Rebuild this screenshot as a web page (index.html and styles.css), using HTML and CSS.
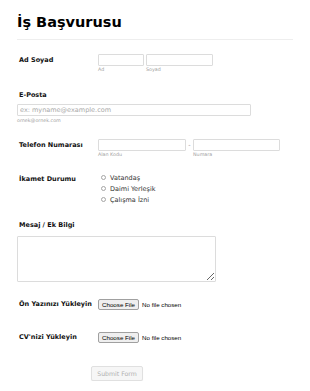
FILE: index.html
```html
<!DOCTYPE html>
<html lang="tr">
<head>
<meta charset="utf-8">
<title>İş Başvurusu</title>
<link rel="stylesheet" href="styles.css">
</head>
<body>
<form class="form">
  <h1 class="title">İş Başvurusu</h1>
  <div class="divider"></div>

  <div class="row row-name">
    <label class="label">Ad Soyad</label>
    <div class="fields">
      <div class="field">
        <input class="input w-first" type="text">
        <span class="sub">Ad</span>
      </div>
      <div class="field">
        <input class="input w-last" type="text">
        <span class="sub">Soyad</span>
      </div>
    </div>
  </div>

  <div class="block block-email">
    <label class="label">E-Posta</label>
    <input class="input w-email" type="email" placeholder="ex: myname@example.com">
    <span class="sub hint">ornek@ornek.com</span>
  </div>

  <div class="row row-phone">
    <label class="label">Telefon Numarası</label>
    <div class="fields">
      <div class="field">
        <input class="input w-area" type="tel">
        <span class="sub">Alan Kodu</span>
      </div>
      <span class="dash">-</span>
      <div class="field">
        <input class="input w-num" type="tel">
        <span class="sub">Numara</span>
      </div>
    </div>
  </div>

  <div class="row row-radio">
    <label class="label label-radio">İkamet Durumu</label>
    <div class="radios">
      <label class="radio"><input type="radio" name="ikamet"><span>Vatandaş</span></label>
      <label class="radio"><input type="radio" name="ikamet"><span>Daimi Yerleşik</span></label>
      <label class="radio"><input type="radio" name="ikamet"><span>Çalışma İzni</span></label>
    </div>
  </div>

  <div class="block block-message">
    <label class="label">Mesaj / Ek Bilgi</label>
    <textarea class="textarea"></textarea>
  </div>

  <div class="row row-file row-cover">
    <label class="label">Ön Yazınızı Yükleyin</label>
    <input class="file" type="file">
  </div>

  <div class="row row-file row-cv">
    <label class="label">CV'nizi Yükleyin</label>
    <input class="file" type="file">
  </div>

  <div class="actions">
    <button class="submit" type="button">Submit Form</button>
  </div>
</form>
</body>
</html>
```

FILE: styles.css
```css
html, body {
  margin: 0;
  padding: 0;
  background: #fff;
}

body {
  font-family: "DejaVu Sans", Verdana, sans-serif;
  color: #000;
}

.form {
  width: 276px;
  padding: 13px 0 0 17px;
}

.title {
  margin: 0;
  font-size: 14.5px;
  line-height: 18px;
  font-weight: bold;
  color: #000;
}

.divider {
  height: 1px;
  background: #eeeeee;
  margin-top: 8px;
}

.row {
  display: grid;
  grid-template-columns: 81px 1fr;
  align-items: start;
}

.label {
  display: block;
  padding-left: 2px;
  font-size: 6.5px;
  font-weight: bold;
  line-height: 12px;
  color: #111;
}

.fields {
  display: flex;
  align-items: flex-start;
}

.field {
  display: flex;
  flex-direction: column;
}

.input {
  box-sizing: border-box;
  height: 12px;
  margin: 0;
  padding: 0 2px;
  border: 1px solid #dcdcdc;
  border-radius: 1px;
  background: #fff;
  font-family: "DejaVu Sans", Verdana, sans-serif;
  font-size: 6.5px;
  color: #333;
  outline: none;
}

.input::placeholder {
  color: #a8a8a8;
}

.sub {
  display: block;
  font-size: 4.8px;
  line-height: 8px;
  color: #a0a0a0;
}

.row-name {
  margin-top: 14px;
}

.w-first { width: 46px; }
.w-last { width: 67px; margin-left: 2px; }
.row-name .field + .field .sub { margin-left: 2px; }

.block-email {
  margin-top: 17px;
}

.block .label {
  line-height: 9px;
}

.w-email {
  display: block;
  width: 234px;
  margin-top: 4px;
}

.hint {
  margin-top: 1px;
}

.row-phone {
  margin-top: 14px;
}

.w-area { width: 88px; }
.w-num { width: 87px; }

.dash {
  width: 7px;
  text-align: center;
  font-size: 6.5px;
  line-height: 12px;
  color: #999;
}

.row-radio {
  margin-top: 13px;
}

.label-radio {
  line-height: 11px;
  padding-top: 2px;
}

.radios {
  display: flex;
  flex-direction: column;
  padding-left: 3px;
}

.radio {
  display: flex;
  align-items: center;
  height: 11px;
  font-size: 6.5px;
  color: #333;
}

.radio input {
  appearance: none;
  -webkit-appearance: none;
  box-sizing: border-box;
  width: 5px;
  height: 5px;
  margin: 0 4px 0 0;
  border: 1px solid #a5a5a5;
  border-radius: 50%;
  background: #fff;
}

.block-message {
  margin-top: 16px;
}

.textarea {
  display: block;
  box-sizing: border-box;
  width: 199px;
  height: 46px;
  margin: 6px 0 0 0;
  padding: 2px;
  border: 1px solid #dcdcdc;
  border-radius: 1px;
  resize: both;
  font-family: "DejaVu Sans", Verdana, sans-serif;
  font-size: 6.5px;
}

.row-file {
  align-items: center;
}

.row-file .label {
  line-height: 11px;
}

.row-cover {
  margin-top: 17px;
}

.row-cv {
  margin-top: 22px;
}

.file {
  height: 11px;
  font-family: "Liberation Sans", Arial, sans-serif;
  font-size: 6.2px;
  color: #000;
}

.file::file-selector-button {
  box-sizing: border-box;
  height: 11px;
  margin: 0 3px 0 0;
  padding: 0 3px;
  border: 1px solid #a0a0a0;
  border-radius: 2px;
  background: #efefef;
  font-family: "Liberation Sans", Arial, sans-serif;
  font-size: 6.2px;
  color: #000;
}

.actions {
  margin-top: 18px;
  padding-left: 74px;
}

.submit {
  box-sizing: border-box;
  width: 52px;
  height: 15px;
  padding: 0;
  border: 1px solid #e0e0e0;
  border-radius: 2px;
  background: #f6f6f6;
  box-shadow: 0 1px 1px rgba(0, 0, 0, 0.06);
  font-family: "DejaVu Sans", Verdana, sans-serif;
  font-size: 6.2px;
  color: #b0b0b0;
}
```
